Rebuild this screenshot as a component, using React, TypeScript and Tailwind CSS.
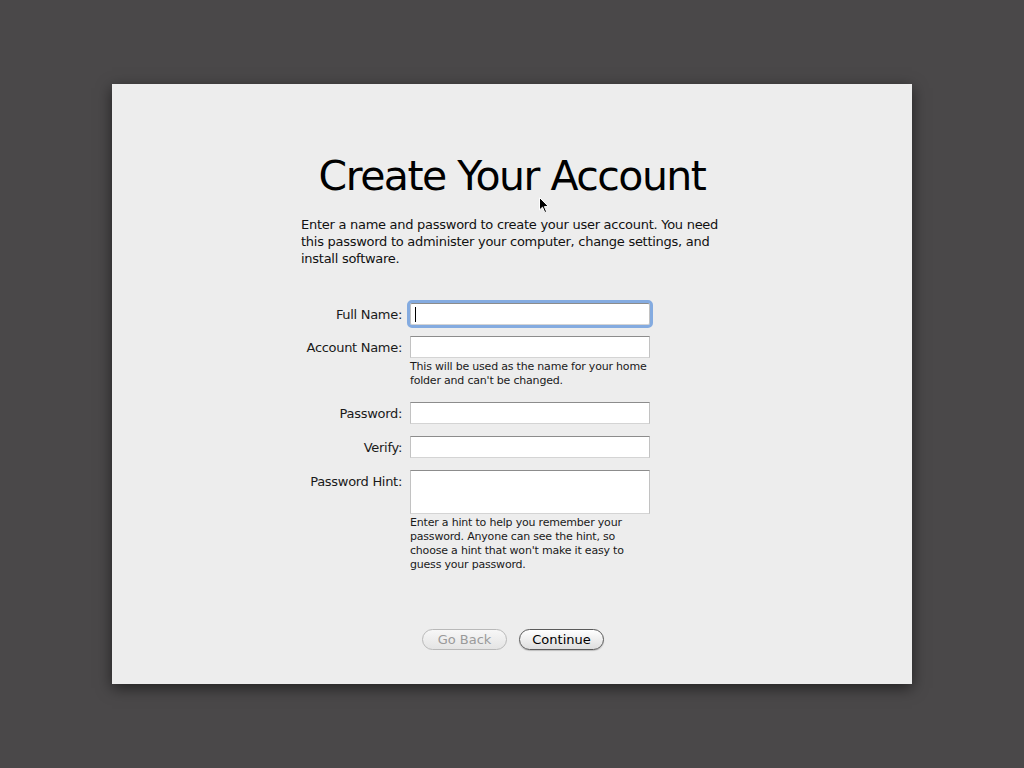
import React from 'react';

const font = { fontFamily: '"DejaVu Sans", "Liberation Sans", sans-serif' };

const fieldBox =
  'w-[240px] bg-white border border-t-[#8c8c8c] border-x-[#c2c2c2] border-b-[#d4d4d4]';

const Field: React.FC<{ label: string; focused?: boolean; tall?: boolean; note?: string[] }> = ({
  label,
  focused,
  tall,
  note,
}) => (
  <div className="flex items-start gap-[8px]">
    <div className="w-[101px] shrink-0 pt-[1px] text-right text-[13px] leading-[22px] tracking-[-0.3px] text-[#1a1a1a] whitespace-nowrap">
      {label}
    </div>
    <div className="flex flex-col">
      <div
        className={`${fieldBox} ${tall ? 'h-[44px]' : 'h-[22px]'} ${
          focused ? 'outline outline-[3px] outline-[#84abe0] rounded-[2px]' : ''
        } relative`}
      >
        {focused && <div className="absolute left-[4px] top-[3px] w-px h-[15px] bg-black" />}
      </div>
      {note && (
        <div className="mt-[2px] text-[11px] leading-[14px] tracking-[-0.2px] text-[#1a1a1a]">
          {note.map((l) => (
            <div key={l} className="whitespace-nowrap">
              {l}
            </div>
          ))}
        </div>
      )}
    </div>
  </div>
);

export default function App() {
  return (
    <div className="min-h-[768px] w-full bg-[#4a4849] pt-[84px]" style={font}>
      <div className="relative mx-auto w-[800px] h-[600px] bg-[#ededed] shadow-[0_4px_14px_rgba(0,0,0,0.55)] flex flex-col items-center pt-[70px]">
        <h1 className="text-[41px] leading-[44px] text-black font-normal tracking-[-1.5px] whitespace-nowrap">
          Create Your Account
        </h1>

        <div className="mt-[18px] w-[422px] text-[13px] leading-[17px] tracking-[-0.27px] text-[#111]">
          <div className="whitespace-nowrap">Enter a name and password to create your user account. You need</div>
          <div className="whitespace-nowrap">this password to administer your computer, change settings, and</div>
          <div className="whitespace-nowrap">install software.</div>
        </div>

        <div className="mt-[36px] w-[422px] flex flex-col">
          <Field label="Full Name:" focused />
          <div className="mt-[10px]">
            <Field
              label="Account Name:"
              note={['This will be used as the name for your home', "folder and can't be changed."]}
            />
          </div>
          <div className="mt-[14px]">
            <Field label="Password:" />
          </div>
          <div className="mt-[11px]">
            <Field label="Verify:" />
          </div>
          <div className="mt-[11px]">
            <Field
              label="Password Hint:"
              tall
              note={[
                'Enter a hint to help you remember your',
                'password. Anyone can see the hint, so',
                "choose a hint that won't make it easy to",
                'guess your password.',
              ]}
            />
          </div>
        </div>

        <div className="mt-auto mb-[34px] flex gap-[12px] ml-[2px]">
          <button className="w-[85px] h-[21px] rounded-full border border-[#b9b9b9] bg-gradient-to-b from-[#f7f7f7] to-[#e4e4e4] text-[13px] leading-[19px] text-[#9a9a9a]">
            Go Back
          </button>
          <button className="w-[85px] h-[21px] rounded-full border border-[#5a5a5a] bg-gradient-to-b from-white to-[#dedede] text-[13px] leading-[19px] text-black shadow-[0_1px_1px_rgba(0,0,0,0.2)]">
            Continue
          </button>
        </div>

        {/* mouse pointer */}
        <svg className="absolute left-[427px] top-[113px]" width="11" height="17" viewBox="0 0 11 17">
          <path d="M0.5 0.5 L0.5 13 L3.5 10.2 L5.8 15.5 L7.6 14.7 L5.4 9.6 L9.5 9.6 Z" fill="black" stroke="white" strokeWidth="1" />
        </svg>
      </div>
    </div>
  );
}
